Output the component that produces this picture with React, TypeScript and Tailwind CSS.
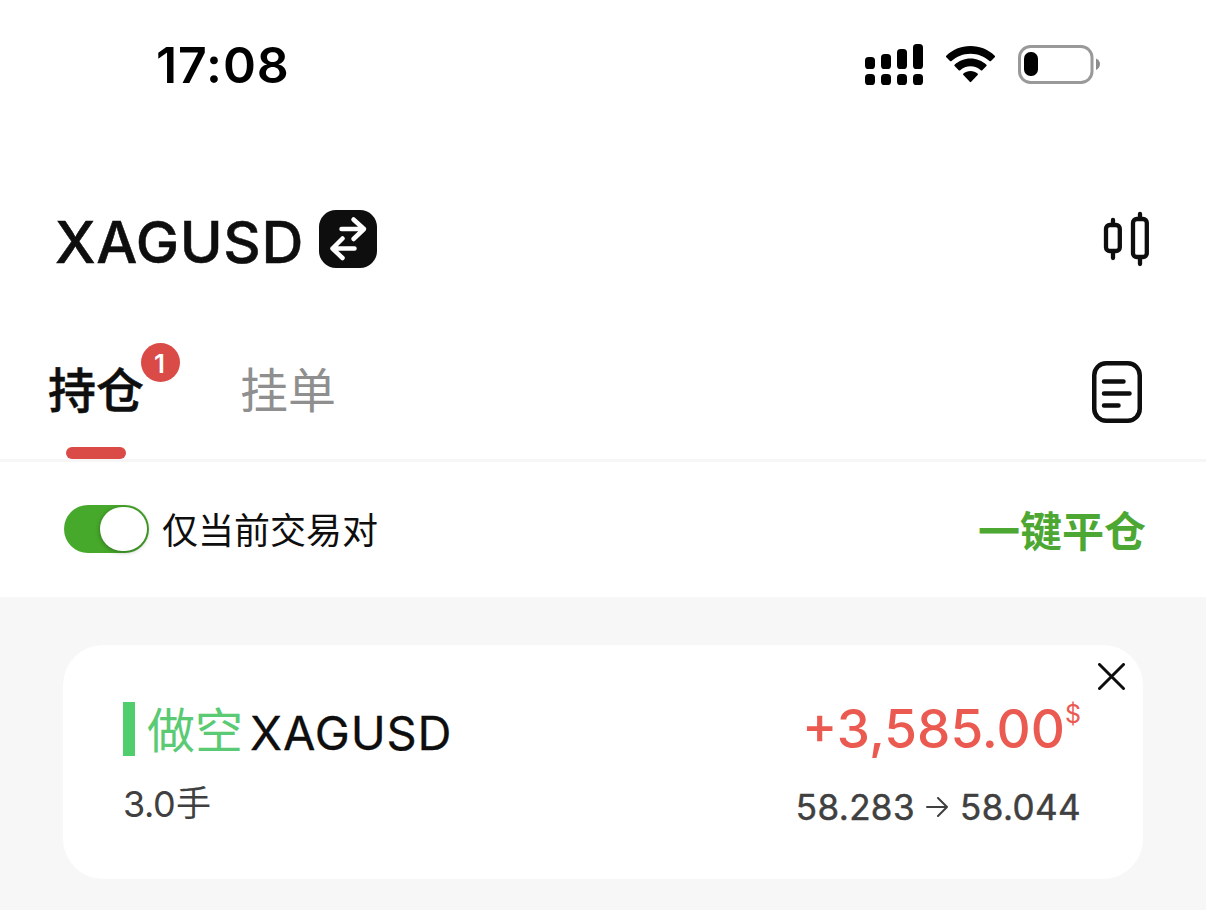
import React, { useState } from 'react';

type TabId = 'positions' | 'orders';

interface Position {
  symbol: string;
  side: string;
  lots: string;
  profit: string;
  openPrice: string;
  currentPrice: string;
}

const positions: Position[] = [
  { symbol: 'XAGUSD', side: '做空', lots: '3.0', profit: '+3,585.00', openPrice: '58.283', currentPrice: '58.044' },
];

const CellularIcon: React.FC = () => (
  <svg width="60" height="42" viewBox="0 0 60 42" fill="#000">
    <rect x="1" y="13" width="10" height="12" rx="3.6" />
    <rect x="17" y="10" width="10" height="15" rx="3.6" />
    <rect x="33" y="5" width="10" height="20" rx="3.6" />
    <rect x="49" y="0" width="10" height="25" rx="3.6" />
    <rect x="1" y="30" width="10" height="11" rx="3.6" />
    <rect x="17" y="30" width="10" height="11" rx="3.6" />
    <rect x="33" y="30" width="10" height="11" rx="3.6" />
    <rect x="49" y="30" width="10" height="11" rx="3.6" />
  </svg>
);

const WifiIcon: React.FC = () => (
  <svg width="50" height="38" viewBox="0 0 50 38" fill="#000">
    <path d="M24.500 0C15 0 6.400 3.700 0.300 9.700Q-0.400 10.400 0.300 11.200L4 15Q4.700 15.700 5.500 15C10.500 10.500 17.300 7.700 24.500 7.700S38.500 10.500 43.500 15Q44.300 15.700 45 15L48.700 11.200Q49.400 10.400 48.700 9.700C42.600 3.700 34 0 24.500 0Z" />
    <path d="M24.500 12.500C18.400 12.500 12.800 14.900 8.600 18.700Q7.900 19.400 8.600 20.100L12.700 24.200Q13.400 24.900 14.200 24.200C17 21.800 20.600 20.300 24.500 20.300S32 21.800 34.800 24.200Q35.600 24.900 36.300 24.200L40.400 20.100Q41.100 19.400 40.400 18.700C36.200 14.900 30.600 12.500 24.500 12.500Z" />
    <path d="M24.500 25C21.800 25 19.300 25.900 17.400 27.600Q16.600 28.400 17.400 29.100L23.800 35.800Q24.500 36.500 25.200 35.800L31.600 29.100Q32.400 28.400 31.600 27.600C29.700 25.900 27.200 25 24.500 25Z" />
  </svg>
);

const BatteryIcon: React.FC = () => (
  <svg width="83" height="40" viewBox="0 0 83 40">
    <rect x="1.500" y="1.500" width="72.500" height="36" rx="11" fill="none" stroke="#999" strokeWidth="3" />
    <rect x="6" y="7" width="14" height="24" rx="6.500" fill="#000" />
    <path d="M78 13.500C80.500 14.600 82 16.700 82 19S80.500 23.800 78 25Z" fill="#8c8c8c" />
  </svg>
);

const SwapIcon: React.FC = () => (
  <svg width="58" height="58" viewBox="0 0 58 58">
    <rect x="0" y="0" width="58" height="58" rx="17" fill="#0e0e0e" />
    <g fill="none" stroke="#fff" strokeWidth="4.500" strokeLinecap="round" strokeLinejoin="round">
      <path d="M22.500 19H45M34.500 9.500L45 19L34.500 29" />
      <path d="M35.500 38.500H13.500M23.500 28.500L13.500 38.500L23.500 48" />
    </g>
  </svg>
);

const CandlesIcon: React.FC = () => (
  <svg width="48" height="56" viewBox="0 0 48 56" fill="none" stroke="#0e0e0e" strokeWidth="4.300" strokeLinecap="round">
    <rect x="4" y="14" width="13.800" height="26" rx="3.800" />
    <path d="M11 9V12.500M11 42.500V47" />
    <rect x="31" y="8" width="13.800" height="38" rx="3.800" />
    <path d="M38 3V6.500M38 47.500V53" />
  </svg>
);

const DocumentIcon: React.FC = () => (
  <svg width="50" height="62" viewBox="0 0 50 62" fill="none" stroke="#0e0e0e" strokeLinecap="round">
    <rect x="2.250" y="2.250" width="45.500" height="57.500" rx="12" strokeWidth="4.500" />
    <path d="M12 20.500H31.500M12 32.500H37.500M12 44.500H26.500" strokeWidth="4.500" />
  </svg>
);

const StatusBar: React.FC = () => (
  <div className="flex h-[130px] items-center justify-between pl-[156px] pr-[105px]">
    <span className="text-[50px] leading-none font-semibold tracking-[0.9px] text-black">17:08</span>
    <div className="flex items-center gap-[22px]">
      <CellularIcon />
      <WifiIcon />
      <BatteryIcon />
    </div>
  </div>
);

const Header: React.FC = () => (
  <header className="flex h-[218px] items-center justify-between pl-[55px] pr-[56px]">
    <div className="flex items-center gap-[16px]">
      <h1 className="mt-[6px] w-[248px] text-[58px] leading-none font-medium tracking-[0.6px] whitespace-nowrap [-webkit-text-stroke:0.5px_#0e0e0e]">XAGUSD</h1>
      <SwapIcon />
    </div>
    <div className="-mt-[1px]">
      <CandlesIcon />
    </div>
  </header>
);

const Tabs: React.FC<{ active: TabId; onChange: (tab: TabId) => void }> = ({ active, onChange }) => (
  <nav className="flex h-[114px] justify-between border-b-[3px] border-[#f6f6f6] pr-[64px] pl-[48px] font-['Noto_Sans_CJK_SC',sans-serif]">
    <div className="flex gap-[96px]">
      <button onClick={() => onChange('positions')} className="relative flex flex-col items-center justify-between">
        <span className={`text-[48px] leading-[78px] ${active === 'positions' ? 'font-medium text-[#0e0e0e] [-webkit-text-stroke:0.5px_#0e0e0e]' : 'text-[#8f8f8f]'}`}>持仓</span>
        {active === 'positions' && <span className="h-3 w-[60px] rounded-full bg-[#da4b48]" />}
        <span className="absolute -top-[5px] left-[93px] flex size-[39px] items-center justify-center rounded-full bg-[#da4b48] pt-[3px] pr-[2px] font-[Inter,sans-serif] text-[26px] leading-none font-semibold text-white">
          {positions.length}
        </span>
      </button>
      <button onClick={() => onChange('orders')} className="flex flex-col items-center justify-between">
        <span className={`text-[48px] leading-[78px] ${active === 'orders' ? 'font-medium text-[#0e0e0e]' : 'text-[#8f8f8f]'}`}>挂单</span>
        {active === 'orders' && <span className="h-3 w-[60px] rounded-full bg-[#da4b48]" />}
      </button>
    </div>
    <button className="mt-[13px] self-start">
      <DocumentIcon />
    </button>
  </nav>
);

const FilterBar: React.FC = () => {
  const [onlyCurrent, setOnlyCurrent] = useState(true);

  return (
    <div className="flex h-[135px] items-center justify-between pr-[60px] pb-[2px] pl-[64px] font-['Noto_Sans_CJK_SC',sans-serif]">
      <div className="flex items-center gap-[13px]">
        <button
          onClick={() => setOnlyCurrent(!onlyCurrent)}
          className={`flex h-12 w-[85px] items-center rounded-full p-[2px] ${onlyCurrent ? 'justify-end bg-[#47a92b]' : 'justify-start bg-gray-300'}`}
        >
          <span className="h-11 w-[47px] rounded-full bg-white shadow-[0_1px_5px_rgba(0,0,0,0.35)]" />
        </button>
        <span className="-mt-[2px] text-[36px] leading-[48px]">仅当前交易对</span>
      </div>
      <button className="text-[42px] leading-[48px] font-bold text-[#4da833]">一键平仓</button>
    </div>
  );
};

const PositionCard: React.FC<{ position: Position }> = ({ position }) => (
  <div className="relative flex h-[234px] justify-between rounded-[40px] bg-white pt-[57px] pr-[62px] pl-[60px]">
    <div className="flex flex-col gap-[19px]">
      <div className="flex h-[54px]">
        <span className="w-3 bg-[#50ce6e]" />
        <span className="ml-[12px] font-['Noto_Sans_CJK_SC',sans-serif] text-[48px] leading-[50px] text-[#5acb74]">{position.side}</span>
        <span className="ml-[7px] pt-[4px] text-[47px] leading-[54px] tracking-[0.9px] [-webkit-text-stroke:0.3px_#0e0e0e]">{position.symbol}</span>
      </div>
      <div className="flex h-[54px] text-[36px] text-[#404040]">
        <span className="pt-[2px] leading-[54px] tracking-[-0.5px]">{position.lots}</span>
        <span className="ml-[1px] font-['Noto_Sans_CJK_SC',sans-serif] text-[35px] leading-[52px]">手</span>
      </div>
    </div>
    <div className="flex flex-col items-end gap-[24px] whitespace-nowrap">
      <div className="flex h-[54px] items-start text-[#eb5a50]">
        <span className="text-[53px] leading-[54px] font-medium">{position.profit}</span>
        <span className="text-[25px] leading-[24px]">$</span>
      </div>
      <div className="flex h-[54px] items-center text-[35px] text-[#404040]">
        <span className="tracking-[0.4px] [-webkit-text-stroke:0.5px_#404040]">{position.openPrice}</span>
        <svg width="22" height="20" viewBox="0 0 22 20" className="mr-[12px] ml-[11px]" fill="none" stroke="#404040" strokeWidth="2" strokeLinecap="round" strokeLinejoin="round">
          <path d="M1 10H21M12 1L21 10L12 19" />
        </svg>
        <span className="tracking-[0.4px] [-webkit-text-stroke:0.5px_#404040]">{position.currentPrice}</span>
      </div>
    </div>
    <button className="absolute top-[18px] right-[17px]">
      <svg width="28" height="28" viewBox="0 0 28 28" stroke="#0e0e0e" strokeWidth="3" strokeLinecap="round">
        <path d="M1.500 1.500L25.500 25.500M25.500 1.500L1.500 25.500" />
      </svg>
    </button>
  </div>
);

const App: React.FC = () => {
  const [activeTab, setActiveTab] = useState<TabId>('positions');

  return (
    <div className="flex min-h-screen flex-col bg-white font-[Inter,'Noto_Sans_CJK_SC',sans-serif] text-[#0e0e0e]">
      <StatusBar />
      <Header />
      <Tabs active={activeTab} onChange={setActiveTab} />
      <FilterBar />
      <main className="flex-1 bg-[#f7f7f7] px-[63px] pt-12">
        {activeTab === 'positions' && positions.map((position) => <PositionCard key={position.symbol} position={position} />)}
      </main>
    </div>
  );
};

export default App;
